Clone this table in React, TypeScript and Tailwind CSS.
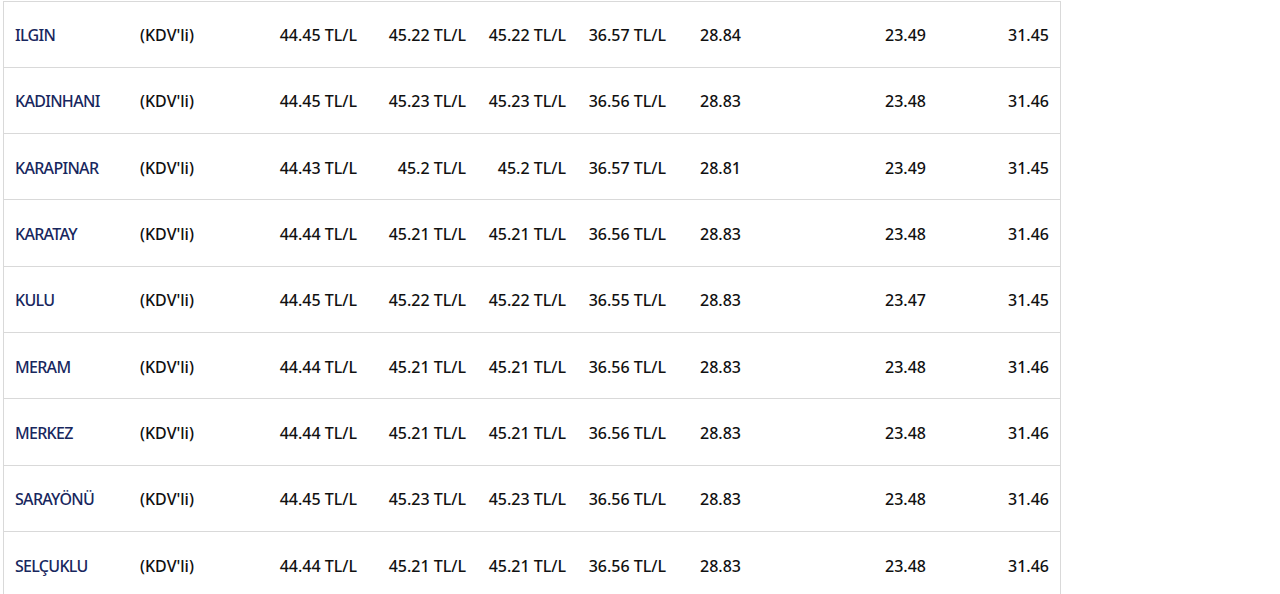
const rows: [string, string, string, string, string, string, string, string][] = [
  ['ILGIN', '44.45 TL/L', '45.22 TL/L', '45.22 TL/L', '36.57 TL/L', '28.84', '23.49', '31.45'],
  ['KADINHANI', '44.45 TL/L', '45.23 TL/L', '45.23 TL/L', '36.56 TL/L', '28.83', '23.48', '31.46'],
  ['KARAPINAR', '44.43 TL/L', '45.2 TL/L', '45.2 TL/L', '36.57 TL/L', '28.81', '23.49', '31.45'],
  ['KARATAY', '44.44 TL/L', '45.21 TL/L', '45.21 TL/L', '36.56 TL/L', '28.83', '23.48', '31.46'],
  ['KULU', '44.45 TL/L', '45.22 TL/L', '45.22 TL/L', '36.55 TL/L', '28.83', '23.47', '31.45'],
  ['MERAM', '44.44 TL/L', '45.21 TL/L', '45.21 TL/L', '36.56 TL/L', '28.83', '23.48', '31.46'],
  ['MERKEZ', '44.44 TL/L', '45.21 TL/L', '45.21 TL/L', '36.56 TL/L', '28.83', '23.48', '31.46'],
  ['SARAYÖNÜ', '44.45 TL/L', '45.23 TL/L', '45.23 TL/L', '36.56 TL/L', '28.83', '23.48', '31.46'],
  ['SELÇUKLU', '44.44 TL/L', '45.21 TL/L', '45.21 TL/L', '36.56 TL/L', '28.83', '23.48', '31.46'],
]

export default function App() {
  return (
    <div className="h-[594px] w-[1280px] overflow-hidden bg-white pt-[0.5px] pl-[3px]" style={{ fontFamily: '"Noto Sans", "Open Sans", sans-serif' }}>
      <div className="w-[1058px] border-x border-[#d9d9d9]">
        {rows.map((r) => (
          <div
            key={r[0]}
            className="grid h-[66.3px] grid-cols-[124px_132px_108px_109px_100px_100px_75px_185px_123px] items-center border-t border-[#d9d9d9] pt-[2px] text-[16px] text-[#111]"
          >
            <span className="pl-[11px] font-medium tracking-[-0.7px] text-[#18275e]">{r[0]}</span>
            <span className="pl-[12px] font-medium">(KDV'li)</span>
            {r.slice(1).map((v, i) => (
              <span key={i} className="pr-[11px] text-right font-medium">
                {v}
              </span>
            ))}
          </div>
        ))}
      </div>
    </div>
  )
}
